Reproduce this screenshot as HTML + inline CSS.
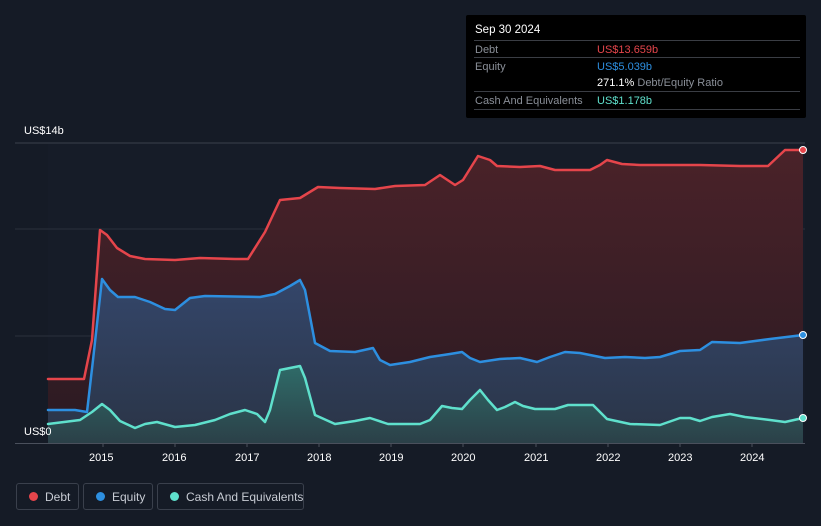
<!DOCTYPE html>
<html><head><meta charset="utf-8"><style>
body{margin:0;width:821px;height:526px;background:#151b26;font-family:"Liberation Sans",sans-serif;overflow:hidden;position:relative}
.tt{position:absolute;left:466px;top:15px;width:340px;height:103px;background:#000;border-radius:2px;font-size:11px;color:#8a8f98}
.tt .h{position:absolute;left:9px;top:9px;color:#fff;font-size:11.5px}
.row{position:absolute;left:8px;width:326px;height:17px;border-top:1px solid #3a3d44}
.row span{position:absolute;top:3px;white-space:nowrap}
.lg{position:absolute;top:483px;height:27px;border:1px solid #3a404c;border-radius:3px;color:#c8ccd4;font-size:12px;box-sizing:border-box;white-space:nowrap}
.lg i{position:absolute;top:8px;left:12px;width:9px;height:9px;border-radius:50%}
.lg span{position:absolute;left:28px;top:6px}
.ax{position:absolute;color:#fff;font-size:11px}
</style></head><body>
<svg width="821" height="526" style="position:absolute;left:0;top:0">
<defs>
<linearGradient id="gd" x1="0" y1="0" x2="0" y2="1"><stop offset="0" stop-color="#4a2229"/><stop offset="1" stop-color="#2a1a22"/></linearGradient>
<linearGradient id="ge" x1="0" y1="0" x2="0" y2="1"><stop offset="0" stop-color="#34466a"/><stop offset="1" stop-color="#2a3446"/></linearGradient>
<linearGradient id="gc" x1="0" y1="0" x2="0" y2="1"><stop offset="0" stop-color="#2f6b68"/><stop offset="1" stop-color="#2b4048"/></linearGradient>
</defs>
<rect x="48" y="143" width="757" height="300" fill="#161c28"/>
<line x1="15" y1="143" x2="805" y2="143" stroke="#3a404c"/>
<line x1="15" y1="229" x2="805" y2="229" stroke="#2a303c"/>
<line x1="15" y1="336" x2="805" y2="336" stroke="#2a303c"/>
<polygon fill="url(#gd)" points="48,443 48,379 84,379 92,340 100,230 107,235 117,248 130,256 145,259 175,260 200,258 235,259 248,259 265,232 280,200 300,198 318,187 340,188 375,189 395,186 425,185 440,175 455,185 463,180 478,156 490,160 497,166 520,167 540,166 555,170 590,170 600,165 607,160 622,164 640,165 700,165 740,166 768,166 785,150 803,150 803,443"/>
<polygon fill="url(#ge)" points="48,443 48,410 75,410 87,412 93,360 102,279 110,290 118,297 135,297 150,302 165,309 175,310 190,298 205,296 260,297 275,294 290,286 300,280 305,290 315,343 330,351 355,352 373,348 380,360 390,365 410,362 430,357 450,354 462,352 470,358 480,362 500,359 520,358 537,362 550,357 565,352 580,353 605,358 625,357 645,358 660,357 680,351 700,350 712,342 740,343 770,339 803,335 803,443"/>
<polygon fill="url(#gc)" points="48,443 48,424 80,420 92,412 102,404 110,410 120,421 135,428 145,424 157,422 175,427 195,425 215,420 230,414 245,410 257,414 265,422 270,410 280,370 300,366 305,378 315,415 335,424 355,421 370,418 388,424 420,424 430,420 442,406 452,408 462,409 470,400 480,390 488,400 497,410 505,407 515,402 523,406 535,409 555,409 568,405 593,405 607,419 630,424 660,425 680,418 690,418 700,421 712,417 730,414 745,417 770,420 785,422 803,418 803,443"/>
<g fill="none" stroke-width="2.5" stroke-linejoin="round" stroke-linecap="round">
<polyline stroke="#e5454b" points="48,379 84,379 92,340 100,230 107,235 117,248 130,256 145,259 175,260 200,258 235,259 248,259 265,232 280,200 300,198 318,187 340,188 375,189 395,186 425,185 440,175 455,185 463,180 478,156 490,160 497,166 520,167 540,166 555,170 590,170 600,165 607,160 622,164 640,165 700,165 740,166 768,166 785,150 803,150"/>
<polyline stroke="#2d8fe0" points="48,410 75,410 87,412 93,360 102,279 110,290 118,297 135,297 150,302 165,309 175,310 190,298 205,296 260,297 275,294 290,286 300,280 305,290 315,343 330,351 355,352 373,348 380,360 390,365 410,362 430,357 450,354 462,352 470,358 480,362 500,359 520,358 537,362 550,357 565,352 580,353 605,358 625,357 645,358 660,357 680,351 700,350 712,342 740,343 770,339 803,335"/>
<polyline stroke="#5fe0cc" points="48,424 80,420 92,412 102,404 110,410 120,421 135,428 145,424 157,422 175,427 195,425 215,420 230,414 245,410 257,414 265,422 270,410 280,370 300,366 305,378 315,415 335,424 355,421 370,418 388,424 420,424 430,420 442,406 452,408 462,409 470,400 480,390 488,400 497,410 505,407 515,402 523,406 535,409 555,409 568,405 593,405 607,419 630,424 660,425 680,418 690,418 700,421 712,417 730,414 745,417 770,420 785,422 803,418"/>
</g>
<circle cx="803" cy="150" r="3.5" fill="#e5454b" stroke="#fff" stroke-width="1"/>
<circle cx="803" cy="335" r="3.5" fill="#2d8fe0" stroke="#fff" stroke-width="1"/>
<circle cx="803" cy="418" r="3.5" fill="#5fe0cc" stroke="#fff" stroke-width="1"/>
<line x1="15" y1="443.5" x2="805" y2="443.5" stroke="#4a505c"/>
<g stroke="#4a505c"><line x1="103" y1="443" x2="103" y2="447"/><line x1="175" y1="443" x2="175" y2="447"/><line x1="247" y1="443" x2="247" y2="447"/><line x1="319" y1="443" x2="319" y2="447"/><line x1="391" y1="443" x2="391" y2="447"/><line x1="463" y1="443" x2="463" y2="447"/><line x1="536" y1="443" x2="536" y2="447"/><line x1="608" y1="443" x2="608" y2="447"/><line x1="680" y1="443" x2="680" y2="447"/><line x1="752" y1="443" x2="752" y2="447"/></g>
</svg>
<div class="ax" style="left:24px;top:125px;color:#fff">US$14b</div>
<div class="ax" style="left:24px;top:426px">US$0</div>
<div class="ax" style="left:89px;top:452px">2015</div>
<div class="ax" style="left:162px;top:452px">2016</div>
<div class="ax" style="left:235px;top:452px">2017</div>
<div class="ax" style="left:307px;top:452px">2018</div>
<div class="ax" style="left:379px;top:452px">2019</div>
<div class="ax" style="left:451px;top:452px">2020</div>
<div class="ax" style="left:524px;top:452px">2021</div>
<div class="ax" style="left:596px;top:452px">2022</div>
<div class="ax" style="left:668px;top:452px">2023</div>
<div class="ax" style="left:740px;top:452px">2024</div>
<div class="tt">
<div class="h">Sep 30 2024</div>
<div class="row" style="top:25px"><span style="left:1px">Debt</span><span style="left:123px;color:#e5454b">US$13.659b</span></div>
<div class="row" style="top:42px"><span style="left:1px">Equity</span><span style="left:123px;color:#2d8fe0">US$5.039b</span></div>
<div class="row" style="top:59px;border-top:none"><span style="left:123px"><b style="color:#fff;font-weight:normal">271.1%</b> Debt/Equity Ratio</span></div>
<div class="row" style="top:76px"><span style="left:1px">Cash And Equivalents</span><span style="left:123px;color:#5fe0cc">US$1.178b</span></div>
<div class="row" style="top:94px;height:0"></div>
</div>
<div class="lg" style="left:16px;width:63px"><i style="background:#e5454b"></i><span>Debt</span></div>
<div class="lg" style="left:83px;width:70px"><i style="background:#2d8fe0"></i><span>Equity</span></div>
<div class="lg" style="left:157px;width:147px"><i style="background:#5fe0cc"></i><span>Cash And Equivalents</span></div>
</body></html>
